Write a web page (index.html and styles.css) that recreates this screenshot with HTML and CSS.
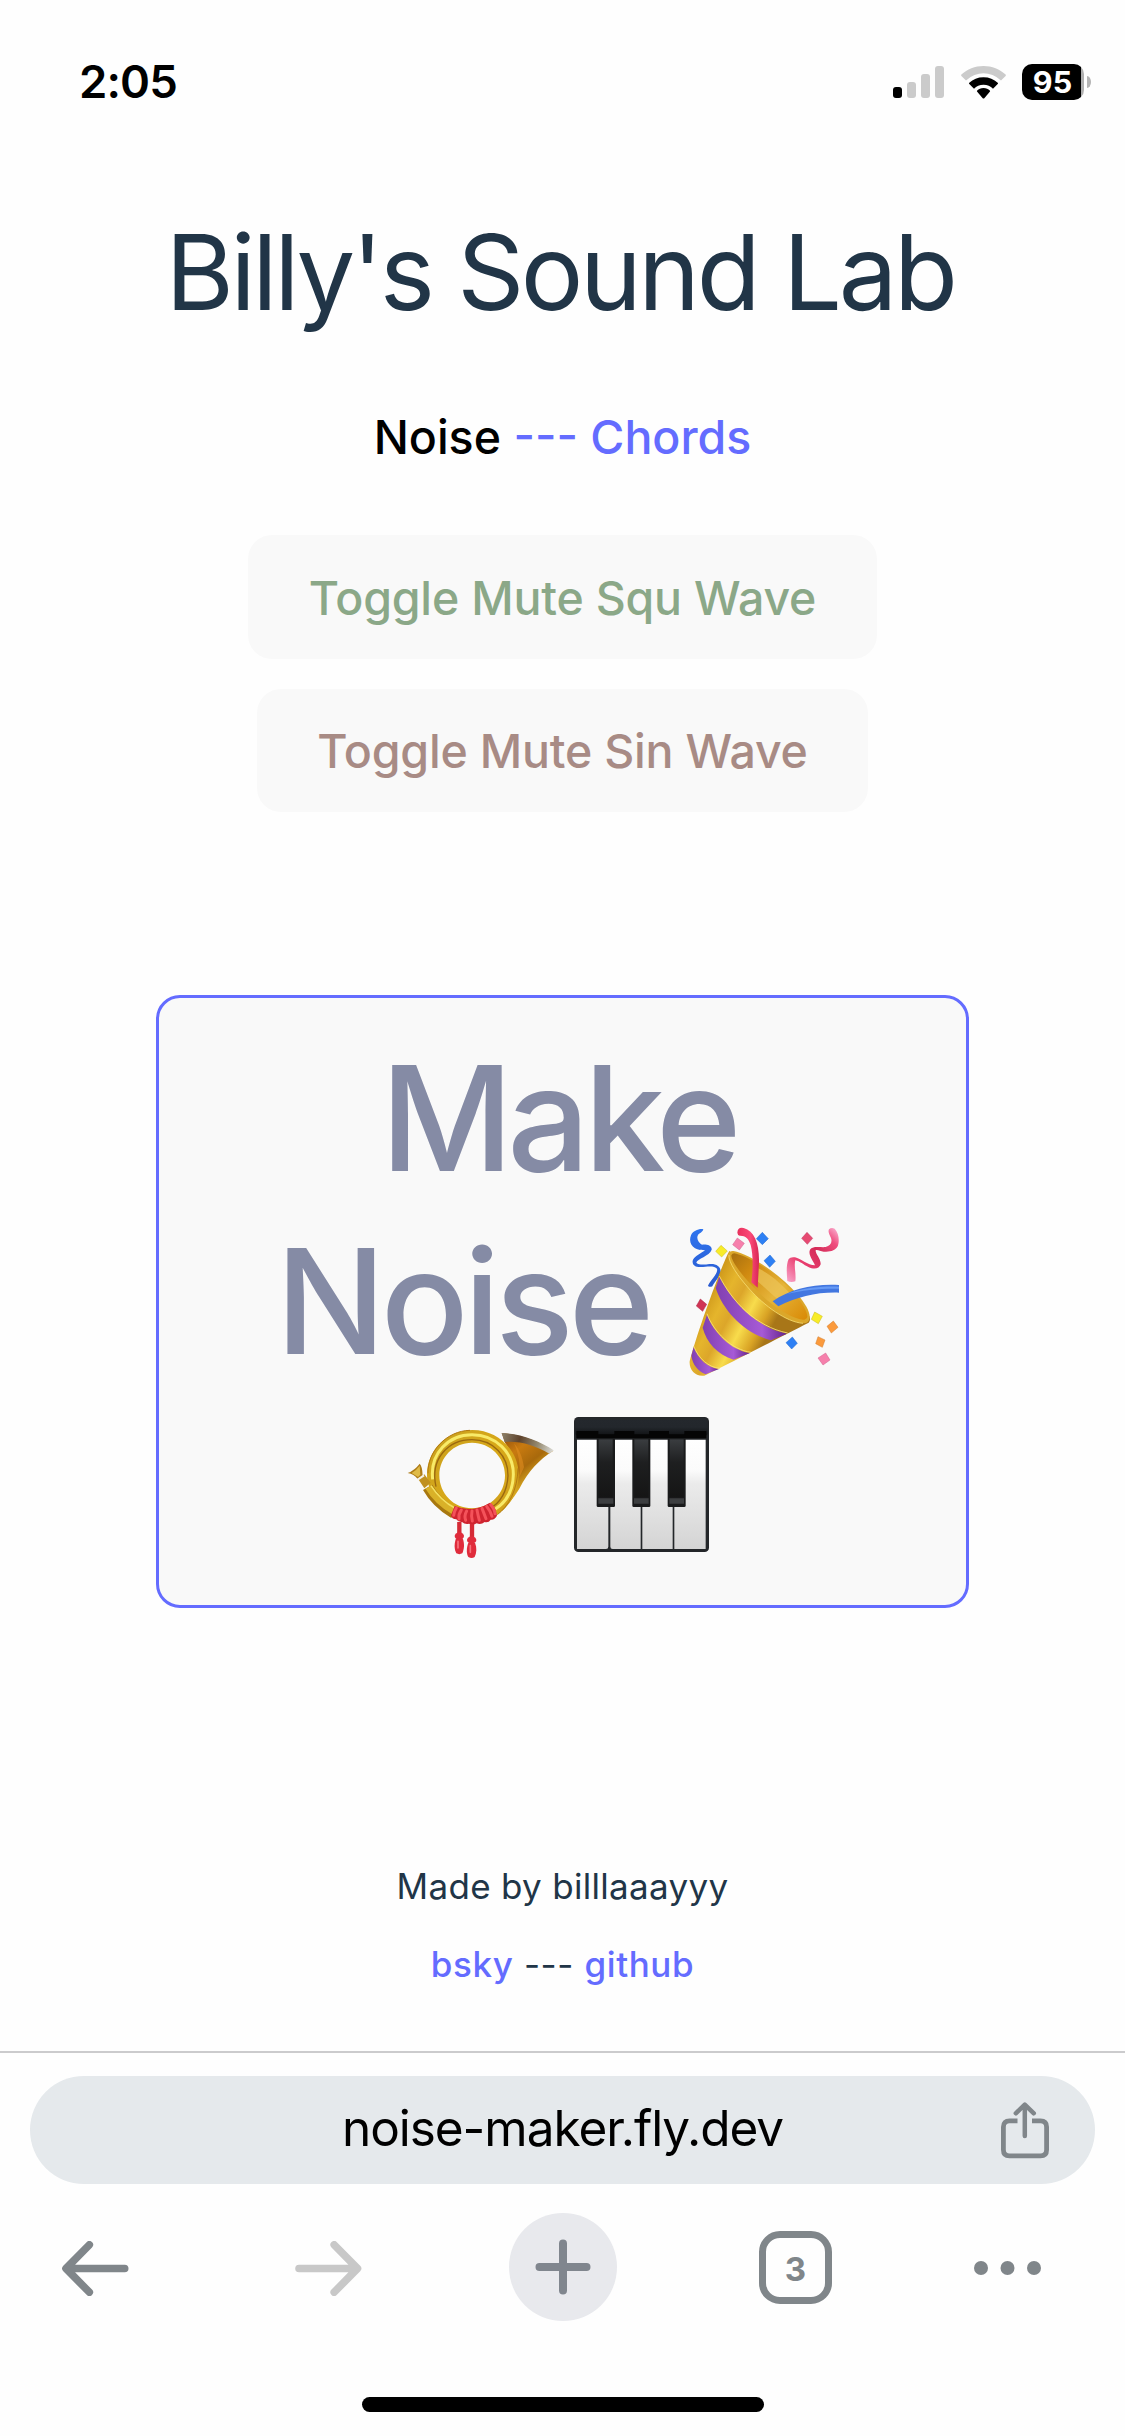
FILE: index.html
```html
<!DOCTYPE html>
<html lang="en">
<head>
<meta charset="utf-8">
<meta name="viewport" content="width=device-width">
<title>Billy's Sound Lab</title>
<link rel="stylesheet" href="styles.css">
</head>
<body>
<div class="screen">
  <header class="status">
    <span class="time">2:05</span>
    <div class="status-icons">
      <svg class="signal" viewBox="0 0 51 32" width="51" height="32" fill="#cbcbcb">
        <rect x="0" y="21" width="9" height="11" rx="3" fill="#000"/>
        <rect x="14" y="16" width="9" height="16" rx="3"/>
        <rect x="28" y="8" width="9" height="24" rx="3"/>
        <rect x="42" y="0" width="9" height="32" rx="3"/>
      </svg>
      <svg class="wifi" viewBox="0 0 45 33" width="45" height="33">
        <path fill="#cbcbcb" d="M22.5 0C14 0 6.200 3.200.4 8.600Q-.2 9.300.4 10L5 14.600Q9 10.600 13.500 8.900Q18 7.200 22.500 7.200T31.500 8.900Q36 10.600 40 14.600L44.600 10Q45.200 9.300 44.600 8.600C38.800 3.200 31 0 22.500 0Z"/>
        <path d="M22.500 11.200C16.800 11.200 12 13.200 8.300 16.700Q7.600 17.400 8.300 18.100L13 22.800C15.500 20.200 18.700 18.700 22.500 18.700S29.500 20.200 32 22.800L36.700 18.100Q37.400 17.400 36.700 16.700C33 13.200 28.200 11.200 22.500 11.200Z"/>
        <path d="M22.500 22C19.800 22 17.700 22.900 16.200 24.400Q15.600 25.100 16.200 25.800L21.700 32.200Q22.500 33 23.300 32.200L28.800 25.800Q29.400 25.100 28.800 24.400C27.300 22.900 25.200 22 22.500 22Z"/>
      </svg>
      <div class="battery">
        <span class="battery-body">95</span>
        <span class="battery-nub"></span>
      </div>
    </div>
  </header>

  <main class="page">
    <h1 class="title">Billy's Sound Lab</h1>
    <nav class="tabs"><span class="tab-current">Noise</span> --- <a>Chords</a></nav>

    <div class="toggles">
      <button class="btn btn-squ">Toggle Mute Squ Wave</button>
      <button class="btn btn-sin">Toggle Mute Sin Wave</button>
    </div>

    <button class="noise">
      <span class="line line-make">Make</span>
      <span class="line line-noise">Noise
        <svg class="popper" viewBox="60 82 450 448" width="150" height="150" role="img" aria-label="party popper">
          <defs>
            <linearGradient id="cone" x1="110" y1="300" x2="300" y2="400" gradientUnits="userSpaceOnUse">
              <stop offset="0" stop-color="#d09a1c"/><stop offset=".22" stop-color="#e5b52c"/><stop offset=".4" stop-color="#dca62a"/><stop offset=".62" stop-color="#f8dc4c"/><stop offset=".85" stop-color="#d9a324"/><stop offset="1" stop-color="#a87618"/>
            </linearGradient>
            <linearGradient id="mouth" x1="190" y1="160" x2="410" y2="360" gradientUnits="userSpaceOnUse">
              <stop offset="0" stop-color="#a8700f"/><stop offset=".25" stop-color="#d08a10"/><stop offset=".6" stop-color="#e6b53a"/><stop offset="1" stop-color="#d98a06"/>
            </linearGradient>
            <linearGradient id="stripe" x1="0" x2="1" y1="0" y2="0">
              <stop offset="0" stop-color="#8140b0"/><stop offset=".65" stop-color="#a65ad6"/><stop offset="1" stop-color="#64248a"/>
            </linearGradient>
            <linearGradient id="pinkA" x1="0" x2="1" y1="0" y2="0">
              <stop offset="0" stop-color="#e8305c"/><stop offset=".6" stop-color="#fa4a78"/><stop offset="1" stop-color="#d82654"/>
            </linearGradient>
            <linearGradient id="pinkB" x1="360" y1="240" x2="500" y2="90" gradientUnits="userSpaceOnUse">
              <stop offset="0" stop-color="#f79ac0"/><stop offset=".3" stop-color="#ea3f70"/><stop offset=".6" stop-color="#d42c58"/><stop offset=".85" stop-color="#f04f80"/><stop offset="1" stop-color="#f8a0c4"/>
            </linearGradient>
            <linearGradient id="blueA" x1="0" x2="0" y1="0" y2="1">
              <stop offset="0" stop-color="#2f74ee"/><stop offset="1" stop-color="#2a5ad0"/>
            </linearGradient>
          </defs>
          <path fill="url(#blueA)" d="M103 88C92 85 72 92 66 106C60 121 64 136 78 145C87 151 99 150 108 151C99 159 75 168 71 182C69 196 81 202 96 201C113 200 137 196 144 206C148 222 124 240 117 257Q121 263 130 259C136 246 152 232 155 216C156 198 140 190 121 192C107 194 90 196 82 188C84 176 122 168 128 149C130 135 110 132 99 134C90 128 82 118 86 107C91 98 100 99 103 88Z"/>
          <path fill="url(#cone)" d="M181 153C160 190 85 395 62 484C60 510 80 531 106 527C200 482 345 405 419 368Q426 360 421 348L300 240Z"/>
          <path fill="url(#stripe)" d="M151 230C188 304 260 382 354 401L306 421C225 399 163 333 140 264Z"/>
          <path fill="url(#stripe)" d="M114 344C133 398 187 451 243 459L194 479C146 465 112 426 101 383Z"/>
          <path fill="url(#stripe)" d="M74 441C88 478 116 504 150 507L110 523C86 512 71 494 67 467Z"/>
          <path fill="none" stroke="#f8e27a" stroke-width="2.500" d="M151 228C188 302 260 380 356 399M114 341C134 396 188 449 246 457M74 438C89 476 118 502 153 505"/>
          <path fill="#dba72a" d="M178 163Q182 152 193 153C250 165 335 226 385 283C410 312 424 337 422 354Q420 371 402 370C350 365 285 316 240 266C205 227 176 183 178 163Z"/>
          <path fill="url(#mouth)" d="M187 166Q191 157 202 161C255 175 335 230 380 286C403 314 416 338 415 351Q410 363 393 358C345 346 294 304 250 258C214 220 186 182 187 166Z"/>
          <path fill="#edc45a" opacity=".7" d="M268 205C310 225 345 260 368 286L328 300L267 245Z"/>
          <path fill="none" stroke="#f6dd70" stroke-width="2.500" d="M180 165C177 185 206 228 241 267C286 317 351 366 402 370"/>
          <path fill="url(#pinkA)" d="M205 98Q206 80 224 84C256 93 271 130 270 185L266 263L247 247C252 210 253 165 245 135C239 115 228 106 212 107Q206 106 205 98Z"/>
          <path fill="#4377e0" d="M311 304C365 266 435 251 510 255V278C445 276 385 290 328 319Z"/>
          <path fill="#669af5" d="M355 282C400 264 455 258 510 260V266C455 265 400 270 355 282Z"/>
          <path fill="url(#pinkB)" d="M355 243C353 220 351 195 359 177Q364 170 378 172C395 175 416 196 438 196C433 184 418 166 422 152C427 136 455 143 470 141C483 137 491 128 486 114C482 104 476 96 480 88Q487 81 497 86C510 99 512 124 506 139C500 151 484 157 464 155C454 154 445 148 440 151C439 162 456 175 455 193C451 207 435 209 418 201C404 195 392 183 379 181C374 198 382 220 379 244Q366 249 355 243Z"/>
          <g stroke-width="1.500">
            <path fill="#2e80f4" stroke="#2468cc" d="M280 97L298 116L280 134L262 116ZM303 165L319 184L302 202L285 182ZM370 411L385 430L368 447L351 428Z"/>
            <path fill="#f8ec28" stroke="#c8b820" d="M156 136L175 153L158 171L140 154ZM437 336L460 349L448 371L427 358Z"/>
            <path fill="#f680ac" stroke="#d0608c" d="M205 114L226 130L211 150L191 134ZM470 459L483 480L462 495L447 474Z"/>
            <path fill="#e64a72" stroke="#bd3860" d="M414 97L431 115L415 133L398 115Z"/>
            <path fill="#d03454" stroke="#a82848" d="M94 297L113 313L101 334L82 318Z"/>
            <path fill="#fb9a3c" stroke="#d07c2c" d="M493 363L507 382L487 399L474 379ZM447 410L468 420L460 442L440 431Z"/>
          </g>
        </svg>
      </span>
      <span class="line line-emoji">
        <svg viewBox="45 60 450 450" width="150" height="150" role="img" aria-label="postal horn">
          <defs>
            <linearGradient id="bell" x1="345" y1="140" x2="440" y2="260" gradientUnits="userSpaceOnUse">
              <stop offset="0" stop-color="#98540c"/><stop offset=".35" stop-color="#c87a10"/><stop offset=".7" stop-color="#a8690c"/><stop offset="1" stop-color="#d8a820"/>
            </linearGradient>
            <linearGradient id="rim" x1="335" y1="130" x2="490" y2="180" gradientUnits="userSpaceOnUse">
              <stop offset="0" stop-color="#8d826c"/><stop offset=".35" stop-color="#5e432c"/><stop offset=".7" stop-color="#958a70"/><stop offset="1" stop-color="#dcdcd8"/>
            </linearGradient>
            <linearGradient id="tube" x1="120" y1="130" x2="370" y2="370" gradientUnits="userSpaceOnUse">
              <stop offset="0" stop-color="#c8a020"/><stop offset=".5" stop-color="#d8a818"/><stop offset="1" stop-color="#d0a01c"/>
            </linearGradient>
          </defs>
          <path fill="url(#bell)" d="M335 129L345 158C368 190 374 220 372 250L330 345L322 374C350 350 372 322 388 296C416 242 446 210 490 182C440 150 390 133 335 129Z"/>
          <path fill="url(#rim)" d="M335 129C390 131 445 150 491 181L478 191C435 166 390 152 344 156Z"/>
          <path fill="#e08c20" opacity=".6" d="M372 160C385 190 392 220 388 262L402 232C398 205 390 180 372 160Z"/>
          <path fill="url(#tube)" fill-rule="evenodd" d="M247 120C171 120 111 180 111 256C111 300 145 345 195 378L320 374C360 350 386 305 386 254C386 180 323 120 247 120ZM246 158C301 158 345 202 345 256C345 311 301 355 246 355C191 355 148 311 148 256C148 202 191 158 246 158Z"/>
          <path fill="none" stroke="#f8ea68" stroke-width="9" d="M128 268C119 190 176 134 246 134C319 134 371 190 370 254C369 300 349 336 316 357"/>
          <path fill="none" stroke="#9a6810" stroke-width="4" d="M138 290C119 205 176 149 246 149C310 149 355 199 354 257C352 304 330 340 298 356"/>
          <path fill="none" stroke="#b37a12" stroke-width="3" d="M384 235C383 300 355 350 322 374M114 250C112 185 170 122 240 121"/>
          <path fill="none" stroke="#a87810" stroke-width="32" d="M113 292C132 326 158 350 192 370"/>
          <path fill="none" stroke="#d9b128" stroke-width="20" d="M115 291C134 323 160 346 193 365"/>
          <path fill="none" stroke="#f4e060" stroke-width="5" d="M123 287C142 316 165 339 196 355"/>
          <path fill="#c09020" d="M85 268L103 253L122 278L103 295Z"/>
          <path fill="#ae7c18" d="M53 249Q74 241 89 221Q97 228 98 257L83 267Q72 252 53 249Z"/>
          <path fill="#e0bb48" d="M65 249Q80 240 89 227L91 254L84 261Z"/>
          <path stroke="#f4f0e4" stroke-width="6" d="M83 269L102 256"/>
          <path fill="#cf2430" d="M194 348Q246 370 300 338Q316 347 321 377Q313 391 302 389Q296 399 284 396Q273 405 260 400Q249 408 237 401Q225 404 216 396Q204 397 199 388Q185 388 183 376Z"/>
          <g fill="none" stroke="#f4525a" stroke-width="9" stroke-linecap="round">
            <path d="M199 354Q192 365 191 376M214 360Q205 372 207 387M230 363Q222 377 227 391M246 363Q243 379 247 393M261 360Q264 376 268 391M276 355Q282 370 288 386M290 349Q302 364 306 379M302 344Q315 360 315 371"/>
          </g>
          <path stroke="#d52b36" stroke-width="13" d="M208 396V434M246 402V446"/>
          <g fill="#e02c3c">
            <ellipse cx="208" cy="438" rx="14" ry="11"/><path d="M198 445C191 465 194 482 199 490Q208 495 217 490C223 475 224 462 218 445Z"/>
            <ellipse cx="245" cy="450" rx="14" ry="11"/><path d="M235 458C228 476 230 493 235 501Q245 507 254 501C260 487 261 474 255 458Z"/>
          </g>
          <path stroke="#f6737c" stroke-width="5" stroke-linecap="round" d="M204 454V474M241 467V487"/>
        </svg>
        <svg viewBox="553 82 405 405" width="135" height="135" role="img" aria-label="musical keyboard">
          <defs>
            <linearGradient id="white-key" x1="0" x2="0" y1="0" y2="1">
              <stop offset="0" stop-color="#fff"/><stop offset=".28" stop-color="#fbfbfb"/><stop offset=".4" stop-color="#ebebeb"/><stop offset="1" stop-color="#d4d4d4"/>
            </linearGradient>
            <linearGradient id="black-key" x1="0" x2="0" y1="0" y2="1">
              <stop offset="0" stop-color="#3a3d40"/><stop offset=".4" stop-color="#1e1f20"/><stop offset="1" stop-color="#151515"/>
            </linearGradient>
            <linearGradient id="lid" x1="0" x2="0" y1="0" y2="1">
              <stop offset="0" stop-color="#24282d"/><stop offset=".5" stop-color="#23272c"/><stop offset="1" stop-color="#101214"/>
            </linearGradient>
          </defs>
          <rect x="553" y="82" width="405" height="405" rx="13" fill="#232629"/>
          <rect x="557" y="86" width="397" height="52" rx="9" fill="url(#lid)"/>
          <path fill="#050505" d="M560 124H626V134H674V124H734V134H778V124H838V134H884V124H950V146H560Z"/>
          <path fill="url(#white-key)" d="M562 150H656V471Q656 478 649 478H562ZM662 150H753V478H669Q662 478 662 471ZM758 150H849V478H758ZM854 150H948V478H854Z"/>
          <g fill="#191a1b">
            <rect x="621" y="146" width="55" height="206" rx="4"/><rect x="728" y="146" width="54" height="206" rx="4"/><rect x="834" y="146" width="54" height="206" rx="4"/>
          </g>
          <g fill="url(#black-key)">
            <rect x="627" y="149" width="42" height="174"/><rect x="734" y="149" width="42" height="174"/><rect x="840" y="149" width="42" height="174"/>
          </g>
          <path fill="#3c3e40" d="M626 326H671V342H626ZM733 326H777V342H733ZM839 326H883V342H839Z"/>
        </svg>
      </span>
    </button>

    <footer class="credits">
      <p class="made">Made by billlaaayyy</p>
      <p class="links"><a>bsky</a> --- <a>github</a></p>
    </footer>
  </main>

  <div class="browser">
    <div class="address">
      <span class="url">noise-maker.fly.dev</span>
      <svg class="share" viewBox="0 0 48 57" width="48" height="57" fill="none" stroke="#80868a" stroke-width="4.800">
        <path d="M16.500 18.900H8.500Q2.400 18.900 2.400 25V47.700Q2.400 53.900 8.500 53.900H39.500Q45.600 53.900 45.600 47.700V25Q45.600 18.900 39.500 18.900H31"/>
        <path stroke-width="4.500" stroke-linecap="round" stroke-linejoin="round" d="M23.800 34V3M14.800 11.300L23.800 2.600L32.800 11.300"/>
      </svg>
    </div>
    <div class="toolbar">
      <svg class="back" viewBox="0 0 67 55" width="67" height="55" fill="none" stroke="#80868a" stroke-width="7.600" stroke-linecap="round" stroke-linejoin="round">
        <path d="M62.700 27.500H6M27.300 3.800L4 27.500L27.300 51.200"/>
      </svg>
      <svg class="forward" viewBox="0 0 67 55" width="67" height="55" fill="none" stroke="#c8c8c8" stroke-width="7.600" stroke-linecap="round" stroke-linejoin="round">
        <path d="M4 27.500H60M39.200 3.800L62.500 27.500L39.200 51.200"/>
      </svg>
      <div class="new-tab">
        <svg viewBox="0 0 56 56" width="56" height="56" stroke="#80868e" stroke-width="8" stroke-linecap="round">
          <path d="M28 4.500V51.500M4.500 28H51.500"/>
        </svg>
      </div>
      <div class="tab-count">3</div>
      <svg class="more" viewBox="0 0 67 14" width="67" height="14" fill="#80868a">
        <circle cx="7" cy="7" r="7"/><circle cx="33.500" cy="7" r="7"/><circle cx="60" cy="7" r="7"/>
      </svg>
    </div>
    <div class="home-indicator"></div>
  </div>
</div>
</body>
</html>
```

FILE: styles.css
```css
* {
  box-sizing: border-box;
}

body {
  margin: 0;
  background: #fff;
  font-family: Inter, "Liberation Sans", sans-serif;
  font-weight: 400;
}

button {
  font-family: inherit;
  margin: 0;
}

svg {
  display: block;
  flex: none;
}

.screen {
  width: 1125px;
  height: 2436px;
  display: flex;
  flex-direction: column;
  background: #fefefe;
  overflow: hidden;
}

/* Status bar */
.status {
  height: 164px;
  flex: none;
  display: flex;
  align-items: center;
  justify-content: space-between;
  padding: 0 34px 0 79px;
}

.time {
  font-size: 45.5px;
  font-weight: 600;
  letter-spacing: -0.9px;
  line-height: 50px;
  color: #000;
}

.status-icons {
  display: flex;
  align-items: center;
  gap: 16.5px;
}

.battery {
  display: flex;
  align-items: center;
  gap: 3px;
}

.battery-body {
  width: 62px;
  height: 36px;
  border-radius: 10px;
  background: linear-gradient(to right, #000 59px, #b0b0b0 59px);
  color: #fff;
  font-size: 30.5px;
  font-weight: 700;
  line-height: 36px;
  text-align: center;
  padding-right: 1px;
}

.battery-nub {
  width: 4px;
  height: 12px;
  border-radius: 0 4px 4px 0 / 0 6px 6px 0;
  background: #b4b4b4;
}

/* Page */
.page {
  height: 1887px;
  flex: none;
  display: flex;
  flex-direction: column;
  align-items: center;
  padding-top: 48px;
}

.title {
  margin: 0;
  padding-right: 5px;
  font-size: 104.5px;
  font-weight: 400;
  letter-spacing: -3.46px;
  line-height: 120px;
  white-space: nowrap;
  color: #213547;
}

.tabs {
  margin-top: 75px;
  font-size: 46.5px;
  font-weight: 500;
  line-height: 60px;
  color: #646cff;
}

.tab-current {
  color: #000;
}

.toggles {
  margin-top: 68px;
  display: flex;
  flex-direction: column;
  align-items: center;
  gap: 30px;
}

.btn {
  height: 124px;
  padding: 2px 0 0;
  border: 0;
  border-radius: 24px;
  background: #f9f9f9;
  font-size: 46.5px;
  font-weight: 500;
  letter-spacing: -0.2px;
  white-space: nowrap;
}

.btn-squ {
  width: 629px;
  color: #8ba888;
}

.btn-sin {
  width: 611px;
  height: 123px;
  padding-top: 1px;
  color: #a88b85;
}

.noise {
  width: 813px;
  height: 613px;
  margin-top: 183px;
  padding: 0;
  display: flex;
  flex-direction: column;
  justify-content: center;
  border: 3px solid #646cff;
  border-radius: 24px;
  background: #f9f9f9;
  color: #858ba5;
  font-size: 145.5px;
  font-weight: 500;
}

.line {
  height: 183px;
  line-height: 183px;
  display: flex;
  align-items: center;
  justify-content: center;
}

.line-make {
  letter-spacing: -6px;
  padding-right: 9px;
}

.line-noise {
  letter-spacing: -5px;
  gap: 40px;
  padding-right: 10px;
}

.line-emoji {
  gap: 19px;
  padding-right: 11px;
}

.credits {
  margin-top: 253px;
  display: flex;
  flex-direction: column;
  align-items: center;
  gap: 28px;
  font-size: 35px;
  line-height: 50px;
  color: #213547;
}

.credits p {
  margin: 0;
}

.made {
  letter-spacing: 0.31px;
}

.links {
  letter-spacing: 0.6px;
}

.links a {
  font-weight: 500;
  color: #646cff;
}

/* Browser controls */
.browser {
  flex: 1;
  border-top: 2px solid #cbcbcd;
  padding-top: 23px;
  display: flex;
  flex-direction: column;
  align-items: center;
}

.address {
  width: 1065px;
  height: 108px;
  padding: 0 46px;
  display: grid;
  grid-template-columns: 48px 1fr 48px;
  align-items: center;
  border-radius: 54px;
  background: #e5e9ec;
}

.url {
  grid-column: 2;
  font-size: 49.5px;
  letter-spacing: -1.05px;
  line-height: 60px;
  padding-bottom: 5px;
  text-align: center;
  color: #000;
}

.toolbar {
  width: 100%;
  height: 108px;
  margin-top: 29px;
  padding-left: 62px;
  display: flex;
  align-items: center;
  gap: 142px;
}

.back {
  margin-top: 2px;
  margin-right: 24px;
}

.forward {
  margin-top: 2px;
  margin-right: 5px;
}

.more {
  margin-top: 2px;
}

.new-tab {
  width: 108px;
  height: 108px;
  flex: none;
  display: flex;
  align-items: center;
  justify-content: center;
  border-radius: 50%;
  background: #e8e9ed;
}

.tab-count {
  width: 73px;
  height: 73px;
  flex: none;
  border: 7px solid #80868a;
  border-radius: 21px;
  color: #80868a;
  font-size: 33px;
  font-weight: 700;
  line-height: 62px;
  text-align: center;
}

.home-indicator {
  width: 402px;
  height: 15px;
  margin-top: 76px;
  border-radius: 8px;
  background: #000;
}
```
